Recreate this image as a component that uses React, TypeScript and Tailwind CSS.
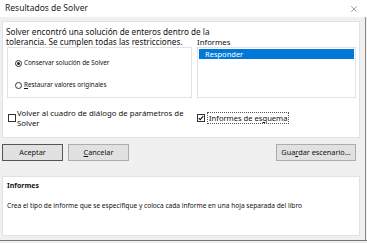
import { X } from "lucide-react";

const font = { fontFamily: '"Noto Sans", "Open Sans", sans-serif' };

function Radio({ checked, label, u }: { checked?: boolean; label: string; u: string }) {
  const rest = label.slice(u.length);
  return (
    <div className="flex items-center gap-[2px] h-[10px]">
      <span className="w-[7px] h-[7px] rounded-full border border-[#333] bg-white flex items-center justify-center">
        {checked && <span className="w-[3px] h-[3px] rounded-full bg-[#222]" />}
      </span>
      <span className="text-[6.3px] leading-[10px] text-[#111]">
        {checked ? label : (<><span className="underline">{u}</span>{rest}</>)}
      </span>
    </div>
  );
}

export default function App() {
  return (
    <div
      className="w-[367px] h-[243px] bg-[#f0f0f0] overflow-hidden flex flex-col text-[#111]"
      style={font}
    >
      {/* Title bar */}
      <div className="h-[17px] bg-white flex items-center justify-between pl-[5px] pr-[8px] shrink-0">
        <span className="text-[8.5px] leading-none text-[#222]">Resultados de Solver</span>
        <X className="w-[10px] h-[10px] text-[#444]" strokeWidth={1.2} />
      </div>

      <div className="flex flex-1 min-h-0">
        <div className="w-[360px] pl-[2px] pt-[4px] flex flex-col">
          {/* Main panel */}
          <div className="h-[117px] bg-white border border-[#dfe3e8] pl-[4px] flex flex-col">
            <div className="grid grid-cols-[185px_159px] gap-x-[5px]">
              <div className="h-[25px] pt-[5px] -ml-[1px] text-[8.2px] leading-[10px] whitespace-nowrap">
                Solver encontró una solución de enteros dentro de la
                <br />
                tolerancia. Se cumplen todas las restricciones.
              </div>
              <div className="h-[25px] flex items-end">
                <span className="text-[7.8px] leading-[10px]">Informes</span>
              </div>
              <div className="h-[51px] border border-[#dfe3e8] pl-[7px] pt-[10px] flex flex-col gap-[12px]">
                <Radio checked label="Conservar solución de Solver" u="" />
                <Radio label="Restaurar valores originales" u="R" />
              </div>
              <div className="h-[51px] border border-[#dfe3e8] p-[1px]">
                <div className="h-[10px] bg-[#0078d7] text-white text-[7.5px] leading-[10px] pl-[6px]">
                  Responder
                </div>
              </div>
            </div>

            <div className="grid grid-cols-[185px_159px] gap-x-[5px] mt-[10px]">
              <div className="flex items-center gap-[1px]">
                <span className="w-[8px] h-[8px] border border-[#333] bg-white shrink-0 ml-[1px]" />
                <span className="text-[7.8px] leading-[10px] whitespace-nowrap">
                  Volver al cuadro de diálogo de parámetros de
                  <br />
                  Solver
                </span>
              </div>
              <div className="flex items-center gap-[2px]">
                <span className="w-[8px] h-[8px] border border-[#333] bg-white flex items-center justify-center shrink-0">
                  <svg viewBox="0 0 8 8" className="w-[6px] h-[6px]">
                    <path d="M1 4.2 L3 6.2 L7 1.5" fill="none" stroke="#111" strokeWidth="1.4" />
                  </svg>
                </span>
                <span className="text-[7.6px] leading-[10px] border border-dotted border-[#555] px-[1px] whitespace-nowrap">
                  Informes de es<span className="underline">q</span>uema
                </span>
              </div>
            </div>
          </div>

          {/* Buttons */}
          <div className="flex items-center mt-[6px] h-[17px]">
            <button className="w-[61px] h-[17px] bg-[#e1e1e1] border-[1.5px] border-[#555] text-[7.3px] leading-none">
              Aceptar
            </button>
            <button className="w-[61px] h-[17px] ml-[5px] bg-[#e1e1e1] border border-[#adadad] text-[7.3px] leading-none">
              <span className="underline">C</span>ancelar
            </button>
            <button className="w-[80px] h-[17px] ml-auto mr-[4px] bg-[#e1e1e1] border border-[#adadad] text-[7.3px] leading-none whitespace-nowrap">
              Gua<span className="underline">r</span>dar escenario...
            </button>
          </div>

          {/* Description panel */}
          <div className="h-[60px] mt-[15px] bg-white border border-[#dfe3e8] px-[4px] pt-[4px]">
            <div className="text-[7px] leading-[10px] font-bold">Informes</div>
            <div className="text-[6.6px] leading-[10px] mt-[10px] whitespace-nowrap">
              Crea el tipo de informe que se especifique y coloca cada informe en una hoja separada del libro
            </div>
          </div>
        </div>
        <div className="flex-1 border-r border-[#888] mr-[1px]" />
      </div>
      <div className="h-[3px] border-t border-[#777] shrink-0" />
    </div>
  );
}
